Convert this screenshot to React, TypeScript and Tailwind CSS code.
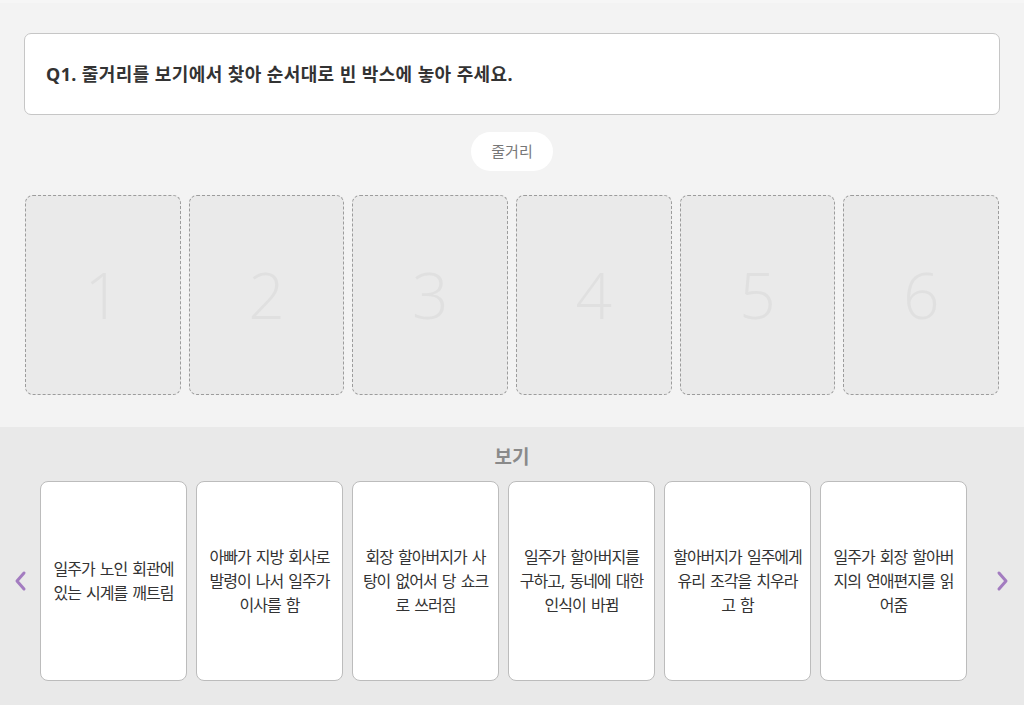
import React from "react";

const cards = [
  "일주가 노인 회관에 있는 시계를 깨트림",
  "아빠가 지방 회사로 발령이 나서 일주가 이사를 함",
  "회장 할아버지가 사탕이 없어서 당 쇼크로 쓰러짐",
  "일주가 할아버지를 구하고, 동네에 대한 인식이 바뀜",
  "할아버지가 일주에게 유리 조각을 치우라고 함",
  "일주가 회장 할아버지의 연애편지를 읽어줌",
];

function Chevron({ dir }: { dir: "left" | "right" }) {
  return (
    <svg width="14" height="22" viewBox="0 0 14 22" fill="none">
      <path
        d={dir === "left" ? "M11 3 L4 11 L11 19" : "M3 3 L10 11 L3 19"}
        stroke="#a37cc0"
        strokeWidth="3"
        strokeLinecap="round"
        strokeLinejoin="round"
      />
    </svg>
  );
}

export default function App() {
  return (
    <div
      className="w-[1024px] h-[705px] bg-[#f3f3f3] flex flex-col overflow-hidden"
      style={{ fontFamily: '"Noto Sans", "Noto Sans CJK KR", sans-serif' }}
    >
      <div className="h-[3px] bg-[#f6f6f6]" />
      <div className="px-[24px] pt-[30px]">
        <div className="h-[82px] bg-white border border-[#c6c6c6] rounded-[7px] flex items-center px-[21px]">
          <span className="text-[18px] font-bold text-[#333] tracking-[0.4px]">
            Q1. 줄거리를 보기에서 찾아 순서대로 빈 박스에 놓아 주세요.
          </span>
        </div>
        <div className="flex justify-center mt-[17px]">
          <div className="w-[82px] h-[39px] rounded-full bg-white flex items-center justify-center text-[15px] text-[#777]">
            줄거리
          </div>
        </div>
        <div className="grid grid-cols-6 gap-[8px] mt-[24px] px-[1px]">
          {[1, 2, 3, 4, 5, 6].map((n) => (
            <div
              key={n}
              className="h-[200px] rounded-[8px] border border-dashed border-[#9c9c9c] bg-[#eaeaea] flex items-center justify-center"
            >
              <span
                className="text-[64px] font-light text-[#e0e0e0] leading-none"
                style={{ fontFamily: '"Open Sans", "Noto Sans", sans-serif', fontWeight: 300 }}
              >
                {n}
              </span>
            </div>
          ))}
        </div>
      </div>
      <div className="flex-1 mt-[32px] bg-[#e9e9e9] flex flex-col">
        <div className="text-center text-[19px] font-bold text-[#8a8a8a] mt-[18px] leading-[24px]">
          보기
        </div>
        <div className="flex items-center mt-[12px]">
          <div className="w-[40px] flex justify-center">
            <Chevron dir="left" />
          </div>
          <div className="flex gap-[9px]">
            {cards.map((c, i) => (
              <div
                key={i}
                className="w-[147px] h-[200px] bg-white border border-[#bcbcbc] rounded-[8px] flex items-center justify-center px-[8px]"
              >
                <p className="text-[16px] leading-[24px] text-[#333] text-center break-all tracking-[-1px] [word-spacing:2px]">
                  {c}
                </p>
              </div>
            ))}
          </div>
          <div className="flex-1 flex justify-start pl-[29px]">
            <Chevron dir="right" />
          </div>
        </div>
      </div>
    </div>
  );
}
